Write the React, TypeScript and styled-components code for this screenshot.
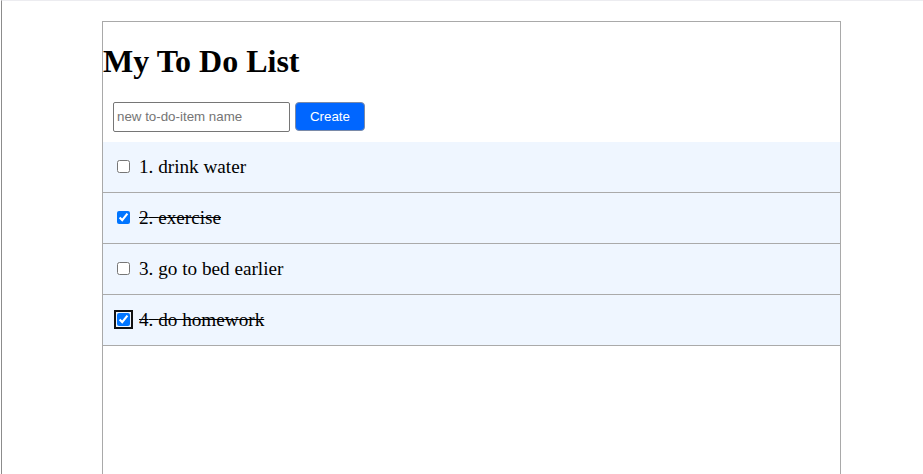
import React, { useState } from "react";
import styled, { createGlobalStyle } from "styled-components";

const Global = createGlobalStyle`
  html, body { margin: 0; padding: 0; background: #fff; }
  body { font-family: "Liberation Serif", "Times New Roman", serif; color: #000; overflow: hidden; }
`;

const Page = styled.div`
  height: 474px;
  box-sizing: border-box;
  overflow: hidden;
  margin-left: 1px;
  border-left: 1px solid #8c8c8c;
  border-top: 1px solid #ececf0;
  padding: 20px 0 0 100px;
`;

const Panel = styled.div`
  width: 739px;
  height: 460px;
  box-sizing: border-box;
  border: 1px solid #a9a9a9;
  display: flex;
  flex-direction: column;
`;

const Title = styled.h1`
  font-size: 32px;
  font-weight: bold;
  margin: 21.44px 0;
  line-height: normal;
`;

const Form = styled.form`
  display: flex;
  align-items: flex-start;
  gap: 5px;
  padding: 0 10px 10px;
`;

const Input = styled.input`
  width: 177px;
  height: 30px;
  box-sizing: border-box;
  border: 1px solid #767676;
  border-radius: 2px;
  padding: 1px 3px;
  font-family: "Liberation Sans", Arial, sans-serif;
  font-size: 13.33px;
  &::placeholder { color: #757575; }
`;

const Button = styled.button`
  height: 29px;
  width: 70px;
  box-sizing: border-box;
  background: #0066ff;
  color: #fff;
  border: 1px solid #7a8aa8;
  border-radius: 4px;
  font-family: "Liberation Sans", Arial, sans-serif;
  font-size: 13.33px;
  padding: 0;
`;

const List = styled.ul`
  list-style: none;
  margin: 0;
  padding: 0;
`;

const Row = styled.li`
  height: 51px;
  box-sizing: border-box;
  display: flex;
  align-items: center;
  padding: 0 10px;
  background: #eff6ff;
  border-bottom: 1px solid #aaaaaa;
`;

const Check = styled.input<{ $focused?: boolean }>`
  width: 13px;
  height: 13px;
  margin: 3px 3px 3px 4px;
  accent-color: #0075ff;
  ${(p) => (p.$focused ? "outline: 2px solid #111; outline-offset: 1px; border-radius: 3px;" : "")}
`;

const Label = styled.span<{ $done: boolean }>`
  font-size: 19.2px;
  margin-left: 6px;
  text-decoration: ${(p) => (p.$done ? "line-through" : "none")};
`;

const initial = [
  { name: "drink water", done: false },
  { name: "exercise", done: true },
  { name: "go to bed earlier", done: false },
  { name: "do homework", done: true },
];

export default function App() {
  const [items, setItems] = useState(initial);
  return (
    <>
      <Global />
      <Page>
        <Panel>
          <Title>My To Do List</Title>
          <Form onSubmit={(e) => e.preventDefault()}>
            <Input placeholder="new to-do-item name" />
            <Button type="submit">Create</Button>
          </Form>
          <List>
            {items.map((it, i) => (
              <Row key={i}>
                <Check
                  type="checkbox"
                  checked={it.done}
                  $focused={i === 3}
                  onChange={() =>
                    setItems(items.map((x, j) => (j === i ? { ...x, done: !x.done } : x)))
                  }
                />
                <Label $done={it.done}>
                  {i + 1}. {it.name}
                </Label>
              </Row>
            ))}
          </List>
        </Panel>
      </Page>
    </>
  );
}
